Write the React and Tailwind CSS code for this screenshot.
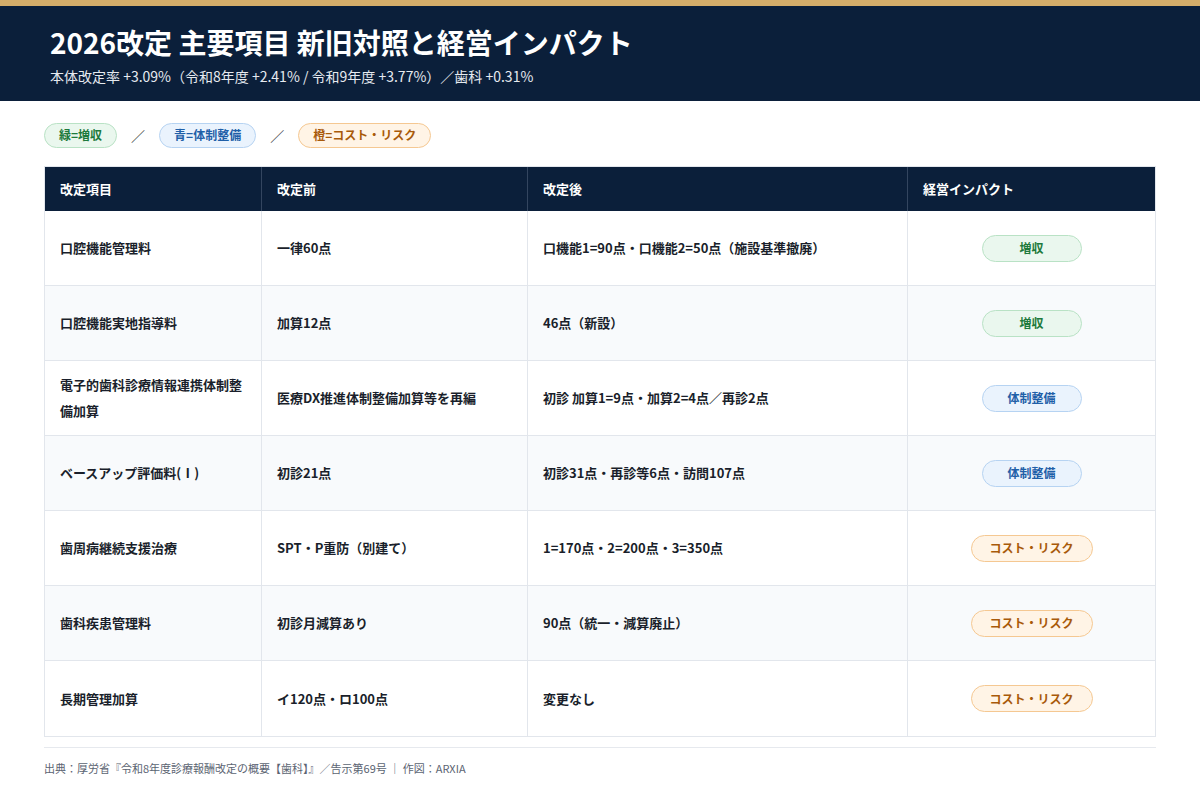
const rows = [
  ["口腔機能管理料", "一律60点", "口機能1=90点・口機能2=50点（施設基準撤廃）", "g"],
  ["口腔機能実地指導料", "加算12点", "46点（新設）", "g"],
  ["電子的歯科診療情報連携体制整備加算", "医療DX推進体制整備加算等を再編", "初診 加算1=9点・加算2=4点／再診2点", "b"],
  ["ベースアップ評価料(Ⅰ)", "初診21点", "初診31点・再診等6点・訪問107点", "b"],
  ["歯周病継続支援治療", "SPT・P重防（別建て）", "1=170点・2=200点・3=350点", "o"],
  ["歯科疾患管理料", "初診月減算あり", "90点（統一・減算廃止）", "o"],
  ["長期管理加算", "イ120点・ロ100点", "変更なし", "o"],
];
const badge = {
  g: ["増収", "bg-[#eaf7ee] border-[#b9e2c5] text-[#1e7a3c] w-[100px]"],
  b: ["体制整備", "bg-[#eaf3fd] border-[#b6d3f2] text-[#1f5fa8] w-[100px]"],
  o: ["コスト・リスク", "bg-[#fff4e6] border-[#f5c892] text-[#a85a0a] w-[122px]"],
};
export default function App() {
  return (
    <div className="w-[1200px] h-[800px] bg-white" style={{ fontFamily: '"Noto Sans CJK JP", "Noto Sans", sans-serif' }}>
      <div className="h-[6px] bg-[#d4ad6a]" />
      <div className="h-[95px] bg-[#0b1f3a] px-[50px] pt-[18px] text-white">
        <div className="text-[28px] font-bold leading-[36px]">2026改定 主要項目 新旧対照と経営インパクト</div>
        <div className="text-[14px] leading-[20px] mt-[6px] text-[#e6eaf0]">本体改定率 +3.09%（令和8年度 +2.41% / 令和9年度 +3.77%）／歯科 +0.31%</div>
      </div>
      <div className="px-[44px]">
        <div className="flex items-center gap-[14px] mt-[21px] h-[26px] text-[12px] font-bold">
          <span className="px-[14px] h-[25px] flex items-center rounded-full border bg-[#eaf7ee] border-[#b9e2c5] text-[#1e7a3c]">緑=増収</span>
          <span className="text-[#444] font-normal text-[14px]">／</span>
          <span className="px-[14px] h-[25px] flex items-center rounded-full border bg-[#eaf3fd] border-[#b6d3f2] text-[#1f5fa8]">青=体制整備</span>
          <span className="text-[#444] font-normal text-[14px]">／</span>
          <span className="px-[14px] h-[25px] flex items-center rounded-full border bg-[#fff4e6] border-[#f5c892] text-[#a85a0a]">橙=コスト・リスク</span>
        </div>
        <div className="mt-[18px] border border-[#e2e6ec]">
          <div className="grid grid-cols-[217px_266px_380px_1fr] h-[44px] bg-[#0b1f3a] text-white text-[13px] font-bold">
            {["改定項目", "改定前", "改定後", "経営インパクト"].map((h, i) => (
              <div key={i} className={`flex items-center px-[15px] ${i < 3 ? "border-r border-[#33455f]" : ""}`}>{h}</div>
            ))}
          </div>
          {rows.map((r, i) => (
            <div key={i} className={`grid grid-cols-[217px_266px_380px_1fr] h-[75px] text-[13px] font-bold text-[#1a1f2b] ${i < rows.length - 1 ? "border-b border-[#e2e6ec]" : ""} ${i % 2 ? "bg-[#f8fafc]" : "bg-white"}`}>
              <div className="flex items-center px-[15px] border-r border-[#e2e6ec] leading-[26px]">{r[0]}</div>
              <div className="flex items-center px-[15px] border-r border-[#e2e6ec]">{r[1]}</div>
              <div className="flex items-center px-[15px] border-r border-[#e2e6ec]">{r[2]}</div>
              <div className="flex items-center justify-center">
                <span className={`h-[27px] flex items-center justify-center rounded-full border text-[12px] font-bold ${badge[r[3]][1]}`}>{badge[r[3]][0]}</span>
              </div>
            </div>
          ))}
        </div>
        <div className="mt-[10px] border-t border-[#e6e9ee] pt-[12px] text-[11px] text-[#5b6472]">出典：厚労省『令和8年度診療報酬改定の概要【歯科】』／告示第69号 ｜ 作図：ARXIA</div>
      </div>
    </div>
  );
}
